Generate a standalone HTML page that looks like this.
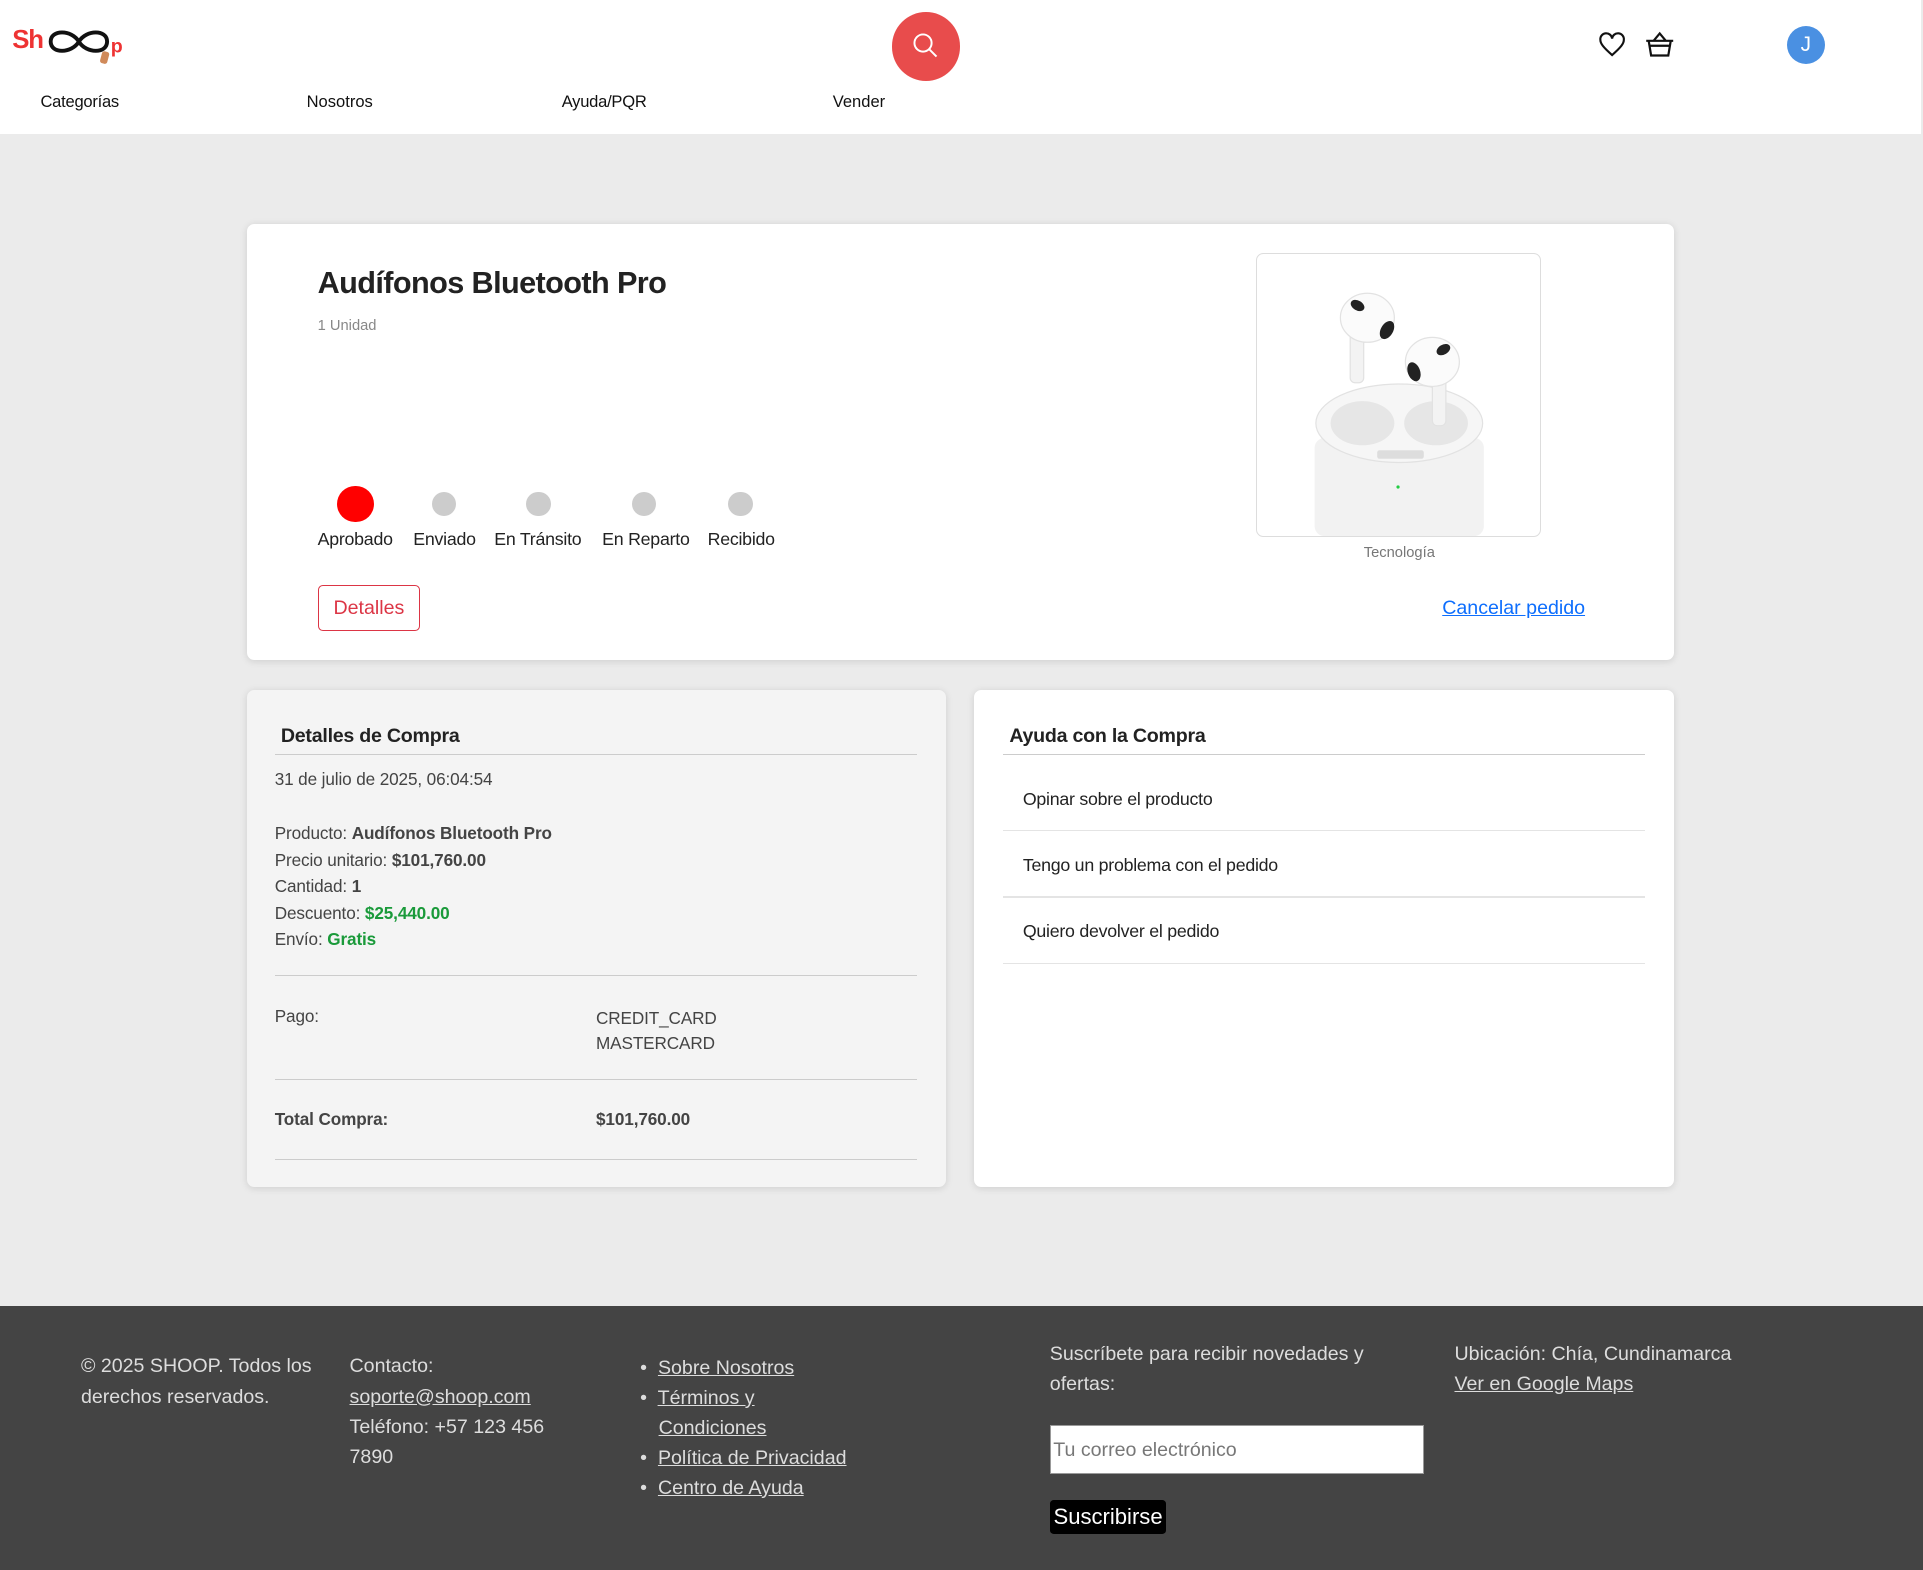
<!DOCTYPE html>
<html><head><meta charset="utf-8"><style>
html,body{margin:0;padding:0;width:1923px;height:1570px;overflow:hidden;background:#ebebeb}
#w{zoom:1.22640;width:1568px;height:1280px;position:relative;font-family:"Liberation Sans",sans-serif;color:#222}
.a{position:absolute;white-space:nowrap}
header{position:absolute;left:0;top:0;width:1566px;height:109px;background:#fff}
.nav{font-size:13.5px;color:#111;top:75px}
.card{position:absolute;border-radius:6px;box-shadow:0 1px 6px rgba(0,0,0,.12)}
.dot{position:absolute;border-radius:50%;background:#ccc;width:20px;height:20px;top:401px}
.lab{font-size:14.5px;top:431px;color:#222;letter-spacing:-0.2px}
.line{position:absolute;height:1px;background:#ccc}
.t{font-size:14px;color:#444;letter-spacing:-0.1px}
b{color:#444}
.g{color:#1a9a3a;font-weight:bold}
footer{position:absolute;left:0;top:1065px;width:1568px;height:215px;background:#444;color:#ddd;font-size:16px;line-height:24.5px}
footer a{color:#ddd;text-decoration:underline}
</style></head><body><div id="w">
<header>
<div class="a" style="left:10px;top:21px;font-size:21px;font-weight:bold;color:#ee3333;letter-spacing:-1px">Sh</div>
<svg class="a" style="left:38px;top:18px" width="66" height="38" viewBox="0 0 66 38"><path d="M26 16C20 6 3 6 3 16s17 10 23 0 23-10 23 0-17 10-23 0" fill="none" stroke="#111" stroke-width="3.2"/><rect x="44" y="24" width="6" height="10" rx="2" fill="#d08a5a" transform="rotate(15 47 29)"/><text x="52" y="25" font-size="16" font-weight="bold" fill="#ee3333" font-family="Liberation Sans">p</text></svg>
<div class="a" style="left:727px;top:10px;width:56px;height:56px;border-radius:50%;background:#e84c4c"></div>
<svg class="a" style="left:744px;top:26px" width="22" height="22" viewBox="0 0 22 22"><circle cx="9" cy="9" r="7" fill="none" stroke="#fff" stroke-width="1.6"/><path d="M14 14l6 6" stroke="#fff" stroke-width="1.6"/></svg>
<svg class="a" style="left:1303px;top:25px" width="23" height="22" viewBox="0 0 24 22"><path d="M12 20C4 13 2 10 2 7a5 5 0 0 1 10-1 5 5 0 0 1 10 1c0 3-2 6-10 13z" fill="none" stroke="#111" stroke-width="1.8"/></svg>
<svg class="a" style="left:1341px;top:25px" width="24" height="22" viewBox="0 0 24 22"><path d="M7 8l5-6 5 6M1 8h22M3 8l2 12h14l2-12M3 12h18" fill="none" stroke="#111" stroke-width="1.8"/></svg>
<div class="a" style="left:1457px;top:21px;width:31px;height:31px;border-radius:50%;background:#4a90e2;color:#fff;font-size:17px;text-align:center;line-height:31px">J</div>
<div class="a nav" style="left:33px;letter-spacing:-0.2px">Categorías</div>
<div class="a nav" style="left:250px">Nosotros</div>
<div class="a nav" style="left:458px;letter-spacing:-0.2px">Ayuda/PQR</div>
<div class="a nav" style="left:679px">Vender</div>
</header>

<div class="card" style="left:201px;top:183px;width:1164px;height:355px;background:#fff"></div>
<div class="a" style="left:259px;top:217px;font-size:25px;font-weight:bold;color:#222;letter-spacing:-0.5px">Audífonos Bluetooth Pro</div>
<div class="a" style="left:259px;top:259px;font-size:12px;color:#888">1 Unidad</div>
<div class="dot" style="left:275px;top:396px;width:30px;height:30px;background:#f00"></div>
<div class="dot" style="left:352px"></div>
<div class="dot" style="left:429px"></div>
<div class="dot" style="left:515px"></div>
<div class="dot" style="left:594px"></div>
<div class="a lab" style="left:259px">Aprobado</div>
<div class="a lab" style="left:337px">Enviado</div>
<div class="a lab" style="left:403px">En Tránsito</div>
<div class="a lab" style="left:491px">En Reparto</div>
<div class="a lab" style="left:577px">Recibido</div>
<div class="a" style="left:259px;top:477px;width:82px;height:36px;border:1px solid #dc3545;border-radius:4px;color:#dc3545;font-size:16px;text-align:center;line-height:36px">Detalles</div>
<div class="a" style="left:1024px;top:206px;width:231px;height:230px;border:1px solid #ddd;border-radius:6px;overflow:hidden;background:#fff">
<svg width="231" height="230" viewBox="0 0 231 230">
<rect x="47" y="150" width="138" height="80" rx="8" fill="#f2f2f2"/>
<ellipse cx="116" cy="138" rx="68" ry="32" fill="#f6f6f6" stroke="#e2e2e2"/>
<ellipse cx="86" cy="138" rx="26" ry="18" fill="#e6e6e6"/><ellipse cx="146" cy="138" rx="26" ry="18" fill="#e6e6e6"/>
<rect x="98" y="160" width="38" height="7" rx="2" fill="#ddd"/>
<circle cx="115" cy="190" r="1.3" fill="#2c4"/>
<rect x="76" y="55" width="11" height="50" rx="4" fill="#f3f3f3" stroke="#e2e2e2"/>
<ellipse cx="90" cy="52" rx="22" ry="20" fill="#fbfbfb" stroke="#e2e2e2"/>
<ellipse cx="82" cy="42" rx="6" ry="4" fill="#222" transform="rotate(30 82 42)"/><ellipse cx="106" cy="62" rx="5" ry="8" fill="#222" transform="rotate(30 106 62)"/>
<rect x="143" y="90" width="11" height="50" rx="4" fill="#f3f3f3" stroke="#e2e2e2"/>
<ellipse cx="143" cy="88" rx="22" ry="20" fill="#fbfbfb" stroke="#e2e2e2"/>
<ellipse cx="152" cy="78" rx="6" ry="4" fill="#222" transform="rotate(-30 152 78)"/><ellipse cx="128" cy="96" rx="5" ry="8" fill="#222" transform="rotate(-20 128 96)"/>
</svg></div>
<div class="a" style="left:1112px;top:444px;font-size:12px;color:#777">Tecnología</div>
<div class="a" style="left:1176px;top:487px;font-size:16px;color:#0d6efd;text-decoration:underline">Cancelar pedido</div>

<div class="card" style="left:201px;top:563px;width:570px;height:405px;background:#f4f4f4"></div>
<div class="a" style="left:229px;top:591px;font-size:16px;font-weight:bold;color:#222;letter-spacing:-0.2px">Detalles de Compra</div>
<div class="line" style="left:224px;top:615px;width:524px"></div>
<div class="a t" style="left:224px;top:627px">31 de julio de 2025, 06:04:54</div>
<div class="a t" style="left:224px;top:669px;line-height:21.5px">Producto: <b>Audífonos Bluetooth Pro</b><br>Precio unitario: <b>$101,760.00</b><br>Cantidad: <b>1</b><br>Descuento: <span class="g">$25,440.00</span><br>Envío: <span class="g">Gratis</span></div>
<div class="line" style="left:224px;top:795px;width:524px"></div>
<div class="a t" style="left:224px;top:820px">Pago:</div>
<div class="a t" style="left:486px;top:820px;line-height:21px">CREDIT_CARD<br>MASTERCARD</div>
<div class="line" style="left:224px;top:880px;width:524px"></div>
<div class="a t" style="left:224px;top:904px;font-weight:bold">Total Compra:</div>
<div class="a t" style="left:486px;top:904px;font-weight:bold">$101,760.00</div>
<div class="line" style="left:224px;top:945px;width:524px"></div>

<div class="card" style="left:794px;top:563px;width:571px;height:405px;background:#fff"></div>
<div class="a" style="left:823px;top:591px;font-size:16px;font-weight:bold;color:#222;letter-spacing:-0.2px">Ayuda con la Compra</div>
<div class="line" style="left:818px;top:615px;width:523px"></div>
<div class="a" style="left:834px;top:643px;font-size:14.5px;letter-spacing:-0.2px">Opinar sobre el producto</div>
<div class="line" style="left:818px;top:677px;width:523px;background:#e4e4e4"></div>
<div class="a" style="left:834px;top:697px;font-size:14.5px;letter-spacing:-0.2px">Tengo un problema con el pedido</div>
<div class="line" style="left:818px;top:731px;width:523px;background:#e4e4e4"></div>
<div class="a" style="left:834px;top:751px;font-size:14.5px;letter-spacing:-0.2px">Quiero devolver el pedido</div>
<div class="line" style="left:818px;top:785px;width:523px;background:#e4e4e4"></div>

<footer>
<div class="a" style="left:66px;top:37px">© 2025 SHOOP. Todos los<br>derechos reservados.</div>
<div class="a" style="left:285px;top:37px">Contacto:<br><a>soporte@shoop.com</a><br>Teléfono: +57 123 456<br>7890</div>
<div class="a" style="left:522px;top:38px;line-height:24.5px">•&nbsp; <a>Sobre Nosotros</a><br>•&nbsp; <a>Términos y</a><br><span style="display:inline-block;width:15px"></span><a>Condiciones</a><br>•&nbsp; <a>Política de Privacidad</a><br>•&nbsp; <a>Centro de Ayuda</a></div>
<div class="a" style="left:856px;top:27px">Suscríbete para recibir novedades y<br>ofertas:</div>
<div class="a" style="left:856px;top:97px;width:305px;height:40px;background:#fff;border:1px solid #999;color:#777;line-height:40px;padding-left:2px;box-sizing:border-box">Tu correo electrónico</div>
<div class="a" style="left:856px;top:158px;height:28px;width:95px;background:#000;color:#fff;font-size:18px;line-height:28px;text-align:center;border-radius:3px">Suscribirse</div>
<div class="a" style="left:1186px;top:27px">Ubicación: Chía, Cundinamarca<br><a>Ver en Google Maps</a></div>
</footer>
</div></body></html>
